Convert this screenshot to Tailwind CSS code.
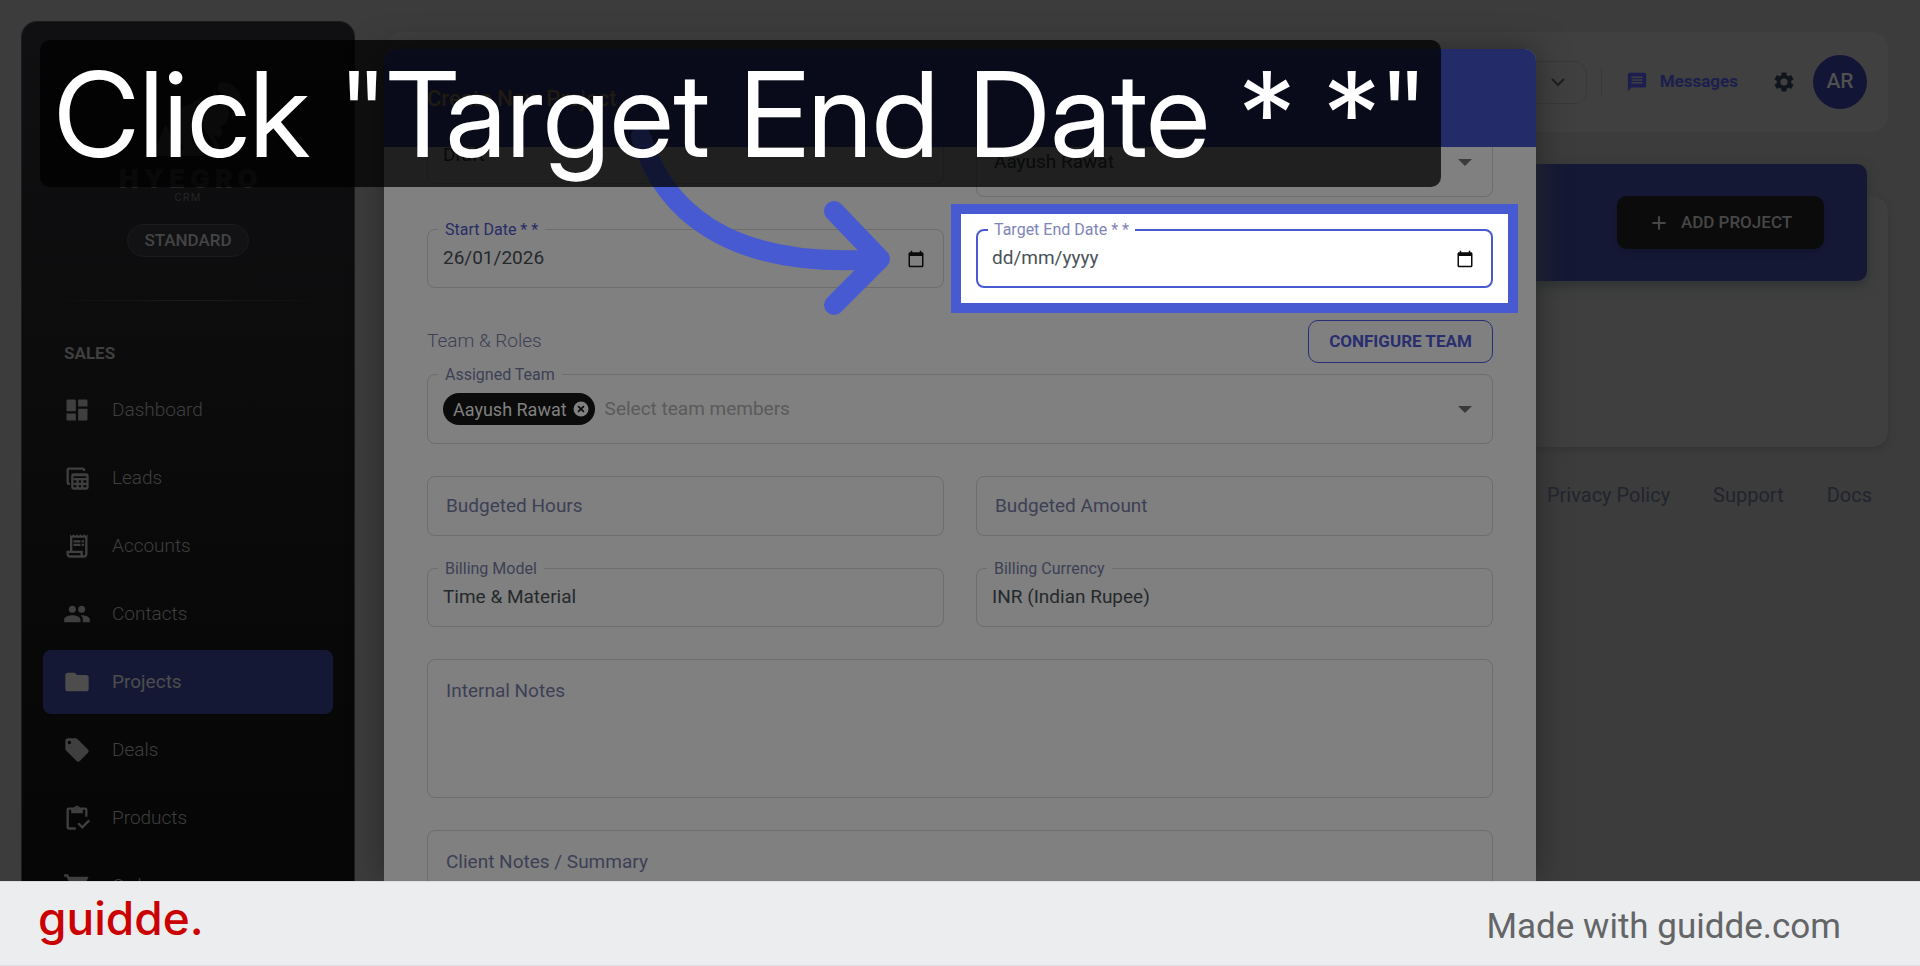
<!DOCTYPE html>
<html lang="en">
<head>
    <meta charset="UTF-8">
    <meta name="viewport" content="width=device-width, initial-scale=1.0">
    <title>Create New Project</title>
    <script src="https://cdn.jsdelivr.net/npm/@tailwindcss/browser@4"></script>
</head>
<body class="flex h-screen flex-col overflow-hidden bg-[#3c3c3c] font-['Roboto',sans-serif]">
    <div class="relative flex min-h-0 flex-1 overflow-hidden">

        <!-- Sidebar -->
        <aside class="mt-[21px] ml-[21px] w-[334px] shrink-0 overflow-hidden rounded-t-2xl border border-b-0 border-[#1c1c1e] bg-linear-to-b from-[#101012] to-[#060606] px-[21px] text-[#3f3f3f]">
            <div class="flex flex-col items-center pt-[50px]">
                <svg class="h-[92px] w-[108px]" viewBox="0 0 108 92" fill="#2a2a2a" aria-hidden="true">
                    <path d="M86 10c14 0 23 10 21 22-1 7-4 11-9 15 1-14-3-23-15-29zM75 26c10-5 20 2 20 14 0 8-4 13-9 15 3 3 3 7-1 10-6-1-9-5-11-10l14 24-4 1-17-29c-6-7-3-20 8-25z"/>
                    <path d="M58 32c4-5 10-6 14-3-8 5-11 13-8 20L52 82 37 45 50 34zM32 52l14 32H18zM56 66l14 18H44z"/>
                </svg>
                <div class="flex h-7 items-center pl-[6px] font-['Inter',sans-serif] text-[26px] font-black tracking-[0.2em] text-[#242424]">HYEGRO</div>
                <div class="text-[11px] leading-3 tracking-widest text-[#242424]">CRM</div>
                <div class="mt-5 flex h-[33px] w-[122px] items-center justify-center rounded-full border border-[#1c1c1e] bg-[#121214] text-[17px] font-medium text-[#444]">STANDARD</div>
            </div>
            <div class="mt-[43px] h-px bg-linear-to-r from-transparent via-[#1c1c1c] to-transparent"></div>
            <h2 class="mt-10 pl-[21px] text-[17px] leading-6 font-bold">SALES</h2>
            <nav class="mt-[13px] flex flex-col gap-1 text-[19px] font-light">
                <a href="#" class="flex h-16 items-center gap-[21px] pl-5">
                    <svg class="size-7" viewBox="0 0 24 24" fill="currentColor"><path d="M4 3h6a1 1 0 0 1 1 1v9H3V4a1 1 0 0 1 1-1zM13 3h7a1 1 0 0 1 1 1v5h-8zM3 15h8v6H4a1 1 0 0 1-1-1zM13 11h8v9a1 1 0 0 1-1 1h-7z"/></svg>
                    Dashboard
                </a>
                <a href="#" class="flex h-16 items-center gap-[21px] pl-5">
                    <svg class="size-7" viewBox="0 0 24 24" fill="none" stroke="currentColor" stroke-width="2"><path d="M6 17H5a1 1 0 0 1-1-1V5a1 1 0 0 1 1-1h12a1 1 0 0 1 1 1v1"/><rect x="8" y="9" width="13" height="12" rx="1"/><path d="M9 9.500h12M9 13h12M9 17h12M12.500 13v8M16.500 13v8"/></svg>
                    Leads
                </a>
                <a href="#" class="flex h-16 items-center gap-[21px] pl-5">
                    <svg class="size-7" viewBox="0 0 24 24" fill="currentColor"><path d="M19.500 3.500 18 2l-1.500 1.500L15 2l-1.500 1.500L12 2l-1.500 1.500L9 2 7.500 3.500 6 2v14H3v3c0 1.660 1.340 3 3 3h12c1.660 0 3-1.340 3-3V2zM15 20H6c-.55 0-1-.45-1-1v-1h10zm4-1c0 .55-.45 1-1 1s-1-.45-1-1v-3H8V5h11zM9 7h6v2H9zm7 0h2v2h-2zm-7 3h6v2H9zm7 0h2v2h-2z"/></svg>
                    Accounts
                </a>
                <a href="#" class="flex h-16 items-center gap-[21px] pl-5">
                    <svg class="size-7" viewBox="0 0 24 24" fill="currentColor"><circle cx="8" cy="8" r="3"/><circle cx="16" cy="8" r="3"/><path d="M8 13c-2.300 0-7 1.200-7 3.500V19h14v-2.500c0-2.300-4.700-3.500-7-3.500zM16 13c-.3 0-.6 0-1 .05 1.200.85 2 2 2 3.450V19h6v-2.500c0-2.300-4.700-3.500-7-3.500z"/></svg>
                    Contacts
                </a>
                <a href="#" aria-current="page" class="flex h-16 items-center gap-[21px] rounded-lg bg-[#151835] pl-5 font-normal text-[#4d4d4d]">
                    <svg class="size-7" viewBox="0 0 24 24" fill="currentColor"><path d="M10 4H4c-1.100 0-2 .9-2 2v12c0 1.100.9 2 2 2h16c1.100 0 2-.9 2-2V8c0-1.100-.9-2-2-2h-8z"/></svg>
                    Projects
                </a>
                <a href="#" class="flex h-16 items-center gap-[21px] pl-5">
                    <svg class="size-7" viewBox="0 0 24 24" fill="currentColor"><path d="m21.400 11.600-9-9C12 2.200 11.500 2 11 2H4c-1.100 0-2 .9-2 2v7c0 .55.2 1.050.6 1.400l9 9c.4.4.9.6 1.400.6s1.050-.2 1.400-.6l7-7c.4-.4.6-.9.6-1.400s-.2-1-.6-1.400zM5.500 7a1.500 1.500 0 1 1 0-3 1.500 1.500 0 0 1 0 3z"/></svg>
                    Deals
                </a>
                <a href="#" class="flex h-16 items-center gap-[21px] pl-5">
                    <svg class="size-7" viewBox="0 0 24 24" fill="none" stroke="currentColor" stroke-width="2"><path d="M11 21H5a1 1 0 0 1-1-1V5a1 1 0 0 1 1-1h14a1 1 0 0 1 1 1v6"/><path d="M7 4h2.500a2.500 2.500 0 0 1 5 0H17v4H7zm5-1a1 1 0 1 0 0 2 1 1 0 0 0 0-2z" fill="currentColor" stroke="none"/><path d="m13 16.500 3.500 3.500 6-6"/></svg>
                    Products
                </a>
                <a href="#" class="flex h-16 items-center gap-[21px] pl-5">
                    <svg class="size-7" viewBox="0 0 24 24" fill="currentColor"><path d="M7 18a2 2 0 1 0 0 4 2 2 0 0 0 0-4zM1 2v2h2l3.600 7.600L5.200 14c-.7 1.300.3 3 1.800 3h12v-2H7.400l1.100-2h7.500c.7 0 1.400-.4 1.700-1L21.700 5c.4-.7-.1-1-.9-1H5.200l-.9-2zM17 18a2 2 0 1 0 0 4 2 2 0 0 0 0-4z"/></svg>
                    Orders
                </a>
            </nav>
        </aside>

        <!-- Page behind the dialog -->
        <main class="min-w-0 flex-1 pt-8 pr-8 pl-8">
            <header class="flex h-[100px] items-center justify-end rounded-2xl bg-[#404040] pr-[21px] text-[#1c1e4e]">
                <button type="button" aria-label="Change workspace" class="flex h-[43px] w-60 items-center justify-end rounded-xl border border-[#383838] pr-4 text-[#1c1c1c]">
                    <svg class="size-6" viewBox="0 0 24 24" fill="none" stroke="currentColor" stroke-width="2"><path d="m6 9 6 6 6-6"/></svg>
                </button>
                <span class="mx-3.5 h-7 w-px bg-[#383838]"></span>
                <a href="#" class="ml-2.5 flex items-center gap-3 text-[17px] font-bold">
                    <svg class="size-[22px]" viewBox="0 0 24 24" fill="currentColor"><path d="M20 2H4c-1.100 0-2 .9-2 2v18l4-4h14c1.100 0 2-.9 2-2V4c0-1.100-.9-2-2-2zM6 6h12v1.500H6zm0 3h12v1.500H6zm0 3h12v1.500H6z" fill-rule="evenodd"/></svg>
                    Messages
                </a>
                <button type="button" aria-label="Settings" class="ml-[34px] text-[#10151d]">
                    <svg class="size-6" viewBox="0 0 24 24" fill="currentColor"><path d="M19.140 12.940c.04-.3.06-.61.06-.94s-.02-.64-.07-.94l2.030-1.580c.18-.14.23-.41.12-.61l-1.920-3.320c-.12-.22-.37-.29-.59-.22l-2.390.96c-.5-.38-1.030-.7-1.620-.94l-.36-2.540c-.04-.24-.24-.41-.48-.41h-3.840c-.24 0-.43.17-.47.41l-.36 2.540c-.59.24-1.130.57-1.620.94l-2.390-.96c-.22-.08-.47 0-.59.22L2.740 8.870c-.12.21-.08.47.12.61l2.030 1.580c-.05.3-.09.63-.09.94s.02.64.07.94l-2.030 1.580c-.18.14-.23.41-.12.61l1.920 3.320c.12.22.37.29.59.22l2.390-.96c.5.38 1.030.7 1.620.94l.36 2.540c.05.24.24.41.48.41h3.840c.24 0 .44-.17.47-.41l.36-2.540c.59-.24 1.130-.56 1.620-.94l2.390.96c.22.08.47 0 .59-.22l1.920-3.320c.12-.22.07-.47-.12-.61zM12 15.600a3.600 3.600 0 1 1 0-7.200 3.600 3.600 0 0 1 0 7.200z"/></svg>
                </button>
                <span class="ml-[17px] flex size-[54px] items-center justify-center rounded-full bg-[#131536] text-[21px] font-medium text-[#505050]">AR</span>
            </header>

            <section class="mt-8">
                <div class="relative mx-[21px] flex h-[117px] items-center justify-end rounded-[10px] bg-[#151835] pr-[43px] shadow-[0_4px_12px_#2c3232]">
                    <button type="button" class="flex h-[53px] w-[207px] items-center justify-center gap-3 rounded-[10px] bg-[#0b0b0b] text-[17px] font-medium text-[#474747] shadow-md">
                        <svg class="size-5" viewBox="0 0 24 24" fill="none" stroke="currentColor" stroke-width="2.500"><path d="M12 4v16M4 12h16"/></svg>
                        ADD PROJECT
                    </button>
                </div>
                <div class="-mt-[85px] h-[251px] rounded-2xl bg-[#3f3f3f] shadow-[0_3px_6px_#353535]"></div>
            </section>

            <footer class="mt-9 flex justify-end gap-[43px] pr-4 text-[20px] leading-6 text-[#22242d]">
                <a href="#">Privacy Policy</a>
                <a href="#">Support</a>
                <a href="#">Docs</a>
            </footer>
        </main>

        <!-- Dialog -->
        <div role="dialog" aria-labelledby="dialogTitle" class="absolute inset-x-[20%] top-[49px] bottom-0 flex flex-col rounded-t-xl bg-[#808080] shadow-[0_0_32px_#282828]">
            <div class="relative z-10 flex h-[98px] shrink-0 items-center rounded-t-xl bg-[#242b69] px-[43px]">
                <h1 id="dialogTitle" class="text-[22px] font-medium text-[#7c6c48]">Create New Project</h1>
            </div>
            <form class="-mt-5 grid grid-cols-2 gap-x-8 gap-y-8 px-[43px] text-[19px] text-[#25292c]">
                <div class="h-[57px] rounded-lg border border-[#6d6d6d]">
                    <select aria-label="Status" class="size-full appearance-none px-[15px]"><option>Draft</option></select>
                </div>
                <div class="flex h-[70px] items-center rounded-lg border border-[#6d6d6d] pr-[15px] pl-[17px]">
                    <input type="text" aria-label="Project Manager" value="Aayush Rawat" class="min-w-0 flex-1">
                    <svg class="size-6" viewBox="0 0 24 24" fill="#3a3a3a"><path d="m5 9 7 7 7-7z"/></svg>
                </div>

                <div class="relative flex h-[59px] items-center rounded-lg border border-[#6d6d6d] px-[15px]">
                    <label for="startDate" class="absolute -top-3 left-2.5 bg-[#808080] px-[7px] text-[16px] leading-6 text-[#282c66]">Start Date * *</label>
                    <input id="startDate" type="text" value="26/01/2026" class="min-w-0 flex-1">
                    <svg class="mr-[3px] size-[18px]" viewBox="0 0 24 24" fill="#0a0a0a"><path d="M20 3h-1V1h-2v2H7V1H5v2H4c-1.100 0-2 .9-2 2v16c0 1.100.9 2 2 2h16c1.100 0 2-.9 2-2V5c0-1.100-.9-2-2-2zm0 18H4V8h16z"/></svg>
                </div>
                <div class="relative z-10 h-[59px]">
                    <div class="absolute -inset-x-[25px] -inset-y-[25px] border-10 border-[#485ad1] bg-white"></div>
                    <div class="relative flex h-[59px] items-center rounded-lg border-2 border-[#485ad1] px-3.5">
                        <label for="targetEndDate" class="absolute -top-[13px] left-2.5 bg-white px-1.5 text-[16px] leading-6 text-[#7e84b8]">Target End Date * *</label>
                        <input id="targetEndDate" type="text" placeholder="dd/mm/yyyy" class="min-w-0 flex-1 placeholder:text-[#4a5258]">
                        <svg class="mr-[3px] size-[18px]" viewBox="0 0 24 24" fill="#0a0a0a"><path d="M20 3h-1V1h-2v2H7V1H5v2H4c-1.100 0-2 .9-2 2v16c0 1.100.9 2 2 2h16c1.100 0 2-.9 2-2V5c0-1.100-.9-2-2-2zm0 18H4V8h16z"/></svg>
                    </div>
                </div>

                <div class="col-span-2">
                    <div class="flex items-center justify-between">
                        <h2 class="text-[19px] font-light text-[#3d3f55]">Team &amp; Roles</h2>
                        <button type="button" class="h-[43px] w-[185px] rounded-[10px] border border-[#282e78] text-[17px] font-bold text-[#282e6e]">CONFIGURE TEAM</button>
                    </div>
                    <div class="relative mt-[11px] flex h-[70px] items-center rounded-lg border border-[#6d6d6d] pr-[15px] pl-[15px]">
                        <label for="assignedTeam" class="absolute -top-3 left-2.5 bg-[#808080] px-[7px] text-[16px] leading-6 text-[#3d3f55]">Assigned Team</label>
                        <span class="flex h-8 items-center gap-1 rounded-full bg-[#0b0b0b] pr-1 pl-2.5 text-[18px] text-[#808080]">
                            Aayush Rawat
                            <button type="button" aria-label="Remove Aayush Rawat">
                                <svg class="size-5" viewBox="0 0 24 24"><circle cx="12" cy="12" r="9" fill="#808080"/><path d="m8.500 8.500 7 7m0-7-7 7" stroke="#0b0b0b" stroke-width="2"/></svg>
                            </button>
                        </span>
                        <input id="assignedTeam" type="text" placeholder="Select team members" class="ml-2.5 min-w-0 flex-1 placeholder:text-[#5a5a5a]">
                        <svg class="size-6" viewBox="0 0 24 24" fill="#3a3a3a"><path d="m5 9 7 7 7-7z"/></svg>
                    </div>
                </div>

                <div class="flex h-[60px] items-center gap-2 rounded-lg border border-[#6d6d6d] px-[18px] text-[#3d3f55]">
                    <label for="budgetHours" class="shrink-0">Budgeted Hours</label>
                    <input id="budgetHours" type="text" class="min-w-0 flex-1">
                </div>
                <div class="flex h-[60px] items-center gap-2 rounded-lg border border-[#6d6d6d] px-[18px] text-[#3d3f55]">
                    <label for="budgetAmount" class="shrink-0">Budgeted Amount</label>
                    <input id="budgetAmount" type="text" class="min-w-0 flex-1">
                </div>

                <div class="relative h-[59px] rounded-lg border border-[#6d6d6d]">
                    <label for="billingModel" class="absolute -top-3 left-2.5 bg-[#808080] px-[7px] text-[16px] leading-6 text-[#3d3f55]">Billing Model</label>
                    <select id="billingModel" class="size-full appearance-none px-[15px]"><option>Time &amp; Material</option></select>
                </div>
                <div class="relative h-[59px] rounded-lg border border-[#6d6d6d]">
                    <label for="billingCurrency" class="absolute -top-3 left-2.5 bg-[#808080] px-[7px] text-[16px] leading-6 text-[#3d3f55]">Billing Currency</label>
                    <select id="billingCurrency" class="size-full appearance-none px-[15px]"><option>INR (Indian Rupee)</option></select>
                </div>

                <div class="col-span-2 flex h-[139px] flex-col rounded-lg border border-[#6d6d6d] px-[18px] pt-[17px] text-[#3d3f55]">
                    <label for="internalNotes">Internal Notes</label>
                    <textarea id="internalNotes" class="flex-1 resize-none"></textarea>
                </div>
                <div class="col-span-2 flex h-[139px] flex-col rounded-lg border border-[#6d6d6d] px-[18px] pt-[17px] text-[#3d3f55]">
                    <label for="clientNotes">Client Notes / Summary</label>
                    <textarea id="clientNotes" class="flex-1 resize-none"></textarea>
                </div>
            </form>
        </div>

        <!-- Arrow and caption over the page -->
        <svg class="absolute top-[120px] left-[620px] z-20 h-[200px] w-[280px]" viewBox="620 120 280 200" fill="none" stroke="#485ad1" stroke-width="20" stroke-linecap="round" stroke-linejoin="round" aria-hidden="true">
            <path d="M641 137C662 205 722 270 878 259M834 211l46 48-46 46"/>
        </svg>
        <div class="absolute top-10 left-10 z-30 flex h-[147px] items-center rounded-[10px] bg-black/75 px-3.5 font-['Inter_Display','Inter',sans-serif] text-[118px] leading-none whitespace-nowrap text-white">Click "Target End Date * *"</div>
    </div>

    <footer class="flex h-[85px] shrink-0 items-center justify-between border-y border-[#dcdde0] bg-[#ecedef] pr-[79px] pl-[38px]">
        <a href="#" class="pb-3 font-['Inter',sans-serif] text-[46px] leading-none font-medium text-[#cb0000]">guidde.</a>
        <p class="pt-1.5 text-[35px] leading-10 text-[#636567]">Made with guidde.com</p>
    </footer>
</body>
</html>
